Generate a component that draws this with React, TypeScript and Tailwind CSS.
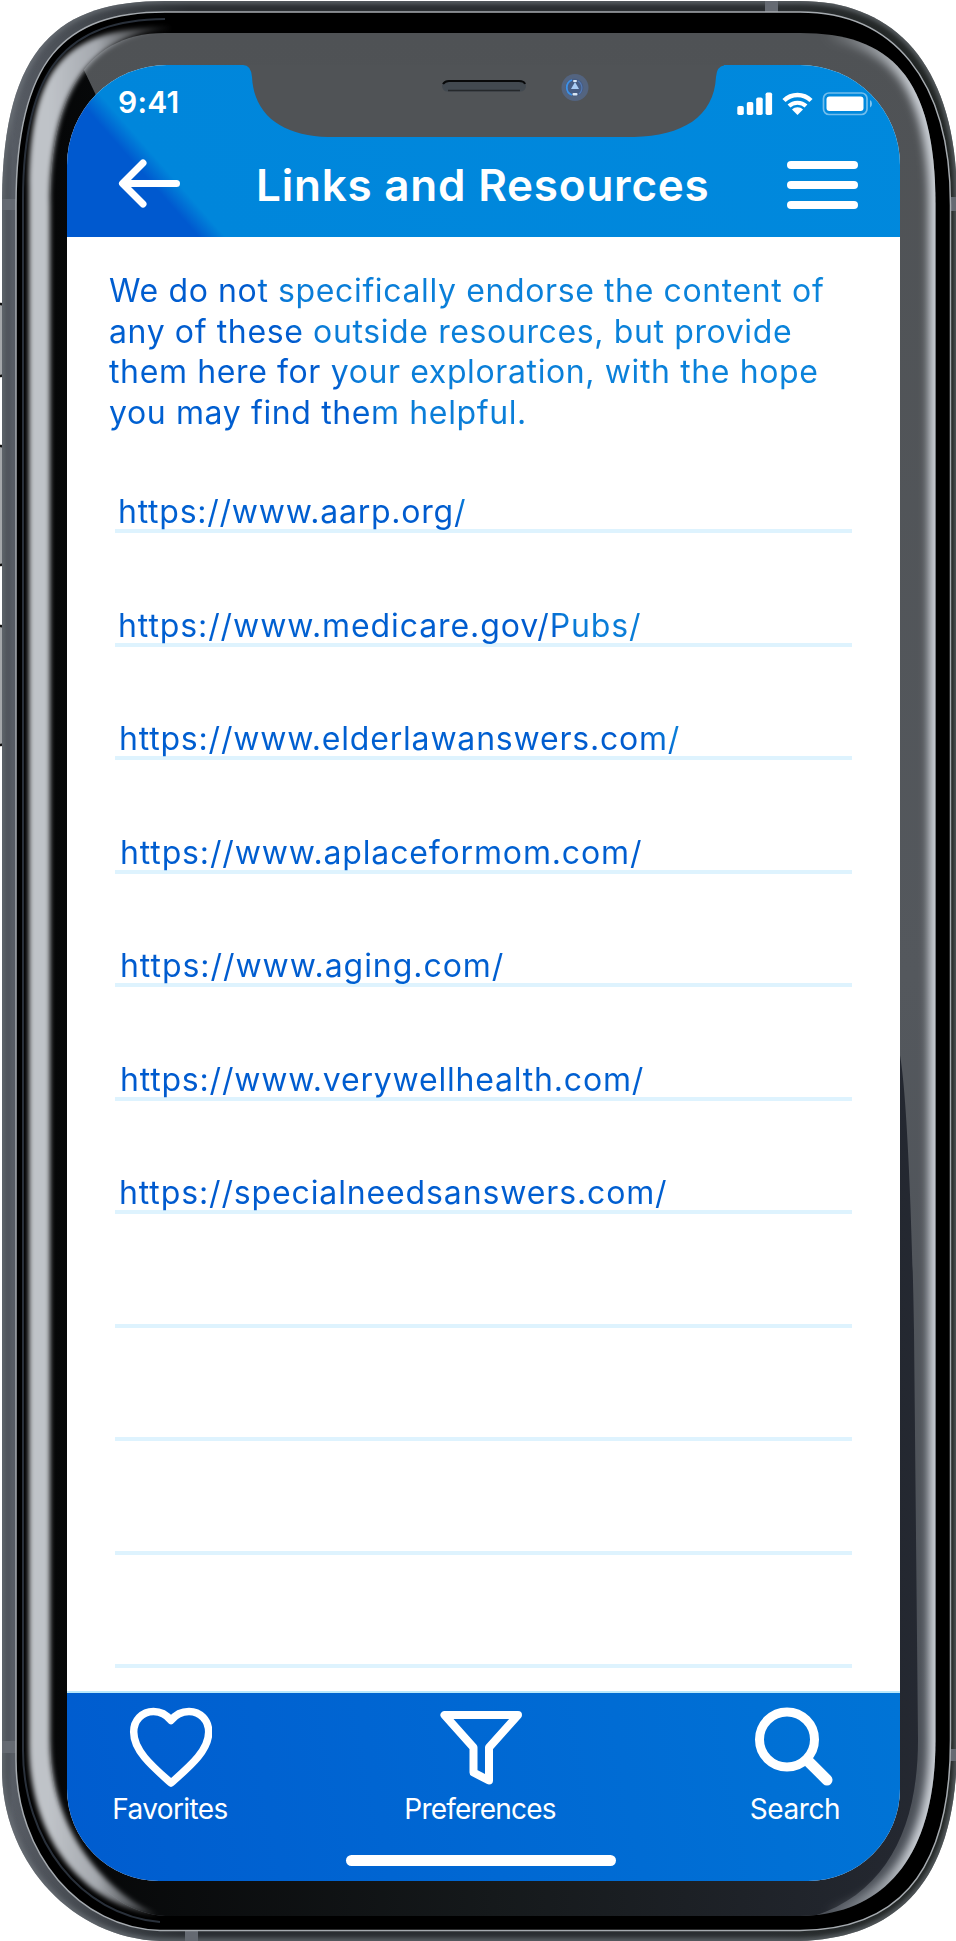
import React from "react";

const links = [
  { url: "https://www.aarp.org/", className: "pl-[3px] tracking-[0.75px]" },
  { url: "https://www.medicare.gov/Pubs/", className: "pl-[3px] tracking-[0.9px]" },
  { url: "https://www.elderlawanswers.com/", className: "pl-[4px] tracking-[0.8px]" },
  { url: "https://www.aplaceformom.com/", className: "pl-[5px] tracking-[0.85px]" },
  { url: "https://www.aging.com/", className: "pl-[5px] tracking-[0.95px]" },
  { url: "https://www.verywellhealth.com/", className: "pl-[5px] tracking-[0.8px]" },
  { url: "https://specialneedsanswers.com/", className: "pl-[4px] tracking-[0.87px]" },
  { url: "", className: "" },
  { url: "", className: "" },
  { url: "", className: "" },
  { url: "", className: "" },
];

const intro = [
  "We do not specifically endorse the content of",
  "any of these outside resources, but provide",
  "them here for your exploration, with the hope",
  "you may find them helpful.",
];

const OUTER =
  "M165 1H800C895 1 957 65 957 200V1745C957 1890 890 1938 800 1941H160C70 1938 2 1860 2 1770V200C3 45 60 1 165 1Z";
const RIM =
  "M165 12H800C892 12 950.500 78 950.500 205V1740C950.500 1882 890 1930 800 1930.500H160C80 1928 16 1855 16 1760V205C16 60 64 12 165 12Z";
const PANEL =
  "M165 33H800C890 33 935.500 76 935.500 205V1740C935.500 1862 880 1915 800 1916H165C95 1912 50 1830 50 1740V205C50 105 80 33 165 33Z";

function PhoneBody() {
  return (
    <svg className="absolute inset-0" width="956" height="1941" viewBox="0 0 956 1941" fill="none" aria-hidden="true">
      <defs>
        <linearGradient id="metal" x1="0" x2="956" y1="0" y2="0" gradientUnits="userSpaceOnUse">
          <stop offset="0" stopColor="#40454b" />
          <stop offset="0.013" stopColor="#575c64" />
          <stop offset="0.2" stopColor="#2a2e32" />
          <stop offset="0.8" stopColor="#2a2e31" />
          <stop offset="1" stopColor="#202422" />
        </linearGradient>
        <linearGradient id="panel" x1="0" x2="0" y1="33" y2="1916" gradientUnits="userSpaceOnUse">
          <stop offset="0" stopColor="#4f5255" />
          <stop offset="0.5" stopColor="#54585d" />
          <stop offset="1" stopColor="#4a4f57" />
        </linearGradient>
        <linearGradient id="base" x1="50" x2="935" y1="0" y2="0" gradientUnits="userSpaceOnUse">
          <stop offset="0" stopColor="#050607" />
          <stop offset="0.5" stopColor="#15191b" />
          <stop offset="1" stopColor="#252932" />
        </linearGradient>
        <linearGradient id="leftShine" x1="50" x2="168" y1="0" y2="0" gradientUnits="userSpaceOnUse">
          <stop offset="0" stopColor="#bfc3c8" />
          <stop offset="0.4" stopColor="#a4a8ae" />
          <stop offset="1" stopColor="#8f9398" stopOpacity="0.1" />
        </linearGradient>
        <linearGradient id="rightShine" x1="825" x2="915" y1="0" y2="0" gradientUnits="userSpaceOnUse">
          <stop offset="0" stopColor="#c3c9cf" stopOpacity="0" />
          <stop offset="1" stopColor="#c9ced4" />
        </linearGradient>
        <clipPath id="panelClip"><path d={PANEL} /></clipPath>
        <clipPath id="outerClip"><path d={OUTER} /></clipPath>
        <filter id="soft2" x="-20%" y="-5%" width="140%" height="110%"><feGaussianBlur stdDeviation="2.6" /></filter>
        <filter id="soft4" x="-20%" y="-5%" width="140%" height="110%"><feGaussianBlur stdDeviation="4.5" /></filter>
      </defs>
      {[[304, 72], [446, 119], [626, 119]].map(([y, h]) => (
        <rect key={y} x="-4" y={y} width="8" height={h} rx="3" fill="#a4a7aa" stroke="#111" strokeWidth="2.500" />
      ))}
      <path d={OUTER} fill="url(#metal)" />
      <g clipPath="url(#outerClip)">
        <path d={OUTER} stroke="#70767c" strokeWidth="4" filter="url(#soft2)" />
        <path d="M2 199H16V210H2ZM765 1H778V13H765ZM185 1930H198V1941H185ZM2 1741H16V1753H2ZM949 197H957V211H949ZM949 1749H957V1761H949Z" fill="#656a72" />
      </g>
      <path d={RIM} fill="#000" stroke="#a6abb0" strokeWidth="1.500" />
      <path d={PANEL} fill="url(#panel)" />
      <g clipPath="url(#panelClip)">
        <path d="M40 130L83 68L104 112V1500H899V1050C908 1090 913 1260 914 1330L918 1740C918 1830 885 1900 800 1920H40Z" fill="url(#base)" />
        <path d="M800 30C892 30 938 76 938 205V1740C938 1864 880 1918 800 1920" stroke="url(#rightShine)" strokeWidth="19" filter="url(#soft4)" />
      </g>
      <path d="M170 27C70 28 29 60 29 190V1745C29 1835 80 1905 158 1915C105 1892 50 1830 50 1740V205C50 105 80 36 170 29Z" fill="url(#leftShine)" filter="url(#soft2)" />
      <path d="M165 19C68 20 23 66 23 200V1750C23 1840 80 1915 160 1922" stroke="#29303a" strokeWidth="2" />
    </svg>
  );
}

function Notch() {
  return (
    <svg className="absolute left-[171px] top-0" width="488" height="73" viewBox="238 65 488 73" fill="none" aria-hidden="true">
      <path d="M238 64V65H243Q251 65 252 77C254 117 285 136 328 137H634C682 136 714 117 716 77Q717 66 724 65.500V64Z" fill="#505356" />
      <rect x="442" y="80.500" width="84" height="11" rx="5.500" fill="#424950" />
      <path d="M443 84Q445 81 449 81H519Q524 81 525 84" stroke="#08090a" strokeWidth="2" />
      <path d="M448 90.500H520" stroke="#25282b" strokeWidth="1.500" />
      <circle cx="575" cy="87.500" r="13.500" fill="#536480" />
      <circle cx="574.500" cy="87.500" r="9" fill="#465c83" />
      <path d="M572 80A8 8 0 0 0 572 95" stroke="#3c91e8" strokeWidth="1.800" />
      <path d="M578 81A8 8 0 0 1 579 94" stroke="#5279b5" strokeWidth="1.200" />
      <path d="M575 82L579 89H571Z" fill="#a9ccf5" />
      <rect x="572.500" y="93" width="5" height="2.500" rx="1" fill="#d8e5f4" />
      <rect x="573" y="80" width="4" height="2" rx="1" fill="#d8e5f4" />
    </svg>
  );
}

function StatusIcons() {
  return (
    <svg width="136" height="25" viewBox="736 91 136 25" fill="none" aria-hidden="true">
      <g fill="#fff">
        <rect x="737.300" y="106" width="6.500" height="9" rx="1.800" />
        <rect x="746.800" y="102" width="6.500" height="13" rx="1.800" />
        <rect x="756.200" y="97.500" width="6.500" height="17.500" rx="1.800" />
        <rect x="765.600" y="92.500" width="6.500" height="22.500" rx="1.800" />
        <rect x="826.500" y="96.500" width="37" height="14.500" rx="3" />
        <path d="M797.500 115L792 109.500C795 106.500 800 106.500 803 109.500Z" />
        <path d="M870 100Q872 101 872 103.700Q872 106.500 870 107.500Z" opacity="0.5" />
      </g>
      <path d="M784 100.500C791.500 93 803.500 93 811 100.500" stroke="#fff" strokeWidth="4.500" />
      <path d="M789 106C793.500 101.500 801.500 101.500 806 106" stroke="#fff" strokeWidth="4" />
      <rect x="823.500" y="93" width="43.500" height="21.500" rx="5.500" stroke="#fff" strokeOpacity="0.45" strokeWidth="1.700" />
    </svg>
  );
}

function Header() {
  return (
    <header className="relative h-[172px] shrink-0 bg-[linear-gradient(48.7deg,#0059cf_0px,#0059cf_99px,#0086db_119px,#0089dd_100%)] text-white">
      <Notch />
      <div className="flex h-[66px] items-start justify-between pt-[19px] pr-[28px] pl-[51px]">
        <span className="text-[30px] leading-[36px] font-semibold tracking-[0.2px] whitespace-nowrap">9:41</span>
        <div className="pt-[7px]"><StatusIcons /></div>
      </div>
      <div className="flex h-[105px] items-start pt-[26px] pl-[51px]">
        <svg className="mt-[2px] shrink-0" width="63" height="50" viewBox="118 159 63 50" fill="none" aria-hidden="true">
          <path d="M176.500 183.500H123M143 163L122.500 183.500L143 204" stroke="#fff" strokeWidth="7" strokeLinecap="round" strokeLinejoin="round" />
        </svg>
        <h1 className="ml-[75px] w-[460px] shrink-0 text-[44px] leading-[56px] font-semibold tracking-[0.78px] whitespace-nowrap">Links and Resources</h1>
        <div className="ml-[71px] flex w-[71px] shrink-0 flex-col gap-[12px] pt-[4px]">
          <span className="h-[8px] rounded-full bg-white" />
          <span className="h-[8px] rounded-full bg-white" />
          <span className="h-[8px] rounded-full bg-white" />
        </div>
      </div>
    </header>
  );
}

function Heart() {
  return (
    <svg width="84" height="82" viewBox="128 1707 84 82" fill="none" aria-hidden="true">
      <path d="M171 1720.500C166 1714 160 1711.500 153.500 1711.500C142 1711.500 133.700 1720.500 133.700 1732C133.700 1751 153 1767 171 1783C189 1767 208.700 1751 208.700 1732C208.700 1720.500 200.500 1711.500 189 1711.500C182 1711.500 176 1714 171 1720.500Z" stroke="#fff" strokeWidth="7.500" strokeLinejoin="round" />
    </svg>
  );
}

function Funnel() {
  return (
    <svg width="84" height="82" viewBox="438 1707 84 82" fill="none" aria-hidden="true">
      <path d="M444.500 1715H518L489 1747.500V1780.500L473.500 1772.500V1747.500Z" stroke="#fff" strokeWidth="8" strokeLinejoin="round" />
    </svg>
  );
}

function Magnifier() {
  return (
    <svg width="84" height="82" viewBox="752 1707 84 82" fill="none" aria-hidden="true">
      <circle cx="786" cy="1739.500" r="27.500" stroke="#fff" strokeWidth="9" />
      <path d="M807 1761L826 1780" stroke="#fff" strokeWidth="11" strokeLinecap="round" />
    </svg>
  );
}

function Tab({ label, className, children }: { label: string; className: string; children: React.ReactNode }) {
  return (
    <button className={"flex flex-col items-center text-[28px] leading-[34px] font-normal whitespace-nowrap " + className}>
      {children}
      <span className="mt-[3px]">{label}</span>
    </button>
  );
}

export default function App() {
  return (
    <div className="relative flex h-[1941px] w-[956px] overflow-hidden bg-white px-[67px] pt-[65px] font-['Inter',sans-serif]">
      <PhoneBody />
      <div className="relative flex h-[1816px] w-[833px] shrink-0 flex-col overflow-hidden rounded-[100px_100px_92px_92px] bg-white">
        <Header />
        <main className="h-[1454px] shrink-0 bg-[linear-gradient(48.7deg,#0055cc_0px,#0060d1_900px,#005ace_1062px,#0a7dd8_1085px,#0a86dc_100%)] bg-clip-text pt-[34px] text-[32px] font-normal text-transparent">
          <div className="pl-[42px] leading-[40.7px] tracking-[0.62px] whitespace-nowrap">
            {intro.map((t) => (
              <p key={t}>{t}</p>
            ))}
          </div>
          {/* Translucent rules let the descenders of the gradient text show through. */}
          <ul className="mt-[-14px] ml-[48px] w-[737px]">
            {links.map(({ url, className }, i) => (
              <li key={i} className={"flex h-[113.5px] items-end border-b-[4px] border-[rgba(0,163,247,0.13)] leading-[40px] whitespace-nowrap " + className}>
                <span className="-mb-[3px]">{url}</span>
              </li>
            ))}
          </ul>
        </main>
        <footer className="flex flex-1 flex-col items-center border-t-2 border-[#b9e8fb] bg-[linear-gradient(80deg,#005ccf,#0068d3_50%,#0074d6)] pr-[5px] text-white">
          <div className="flex h-[134px] w-full items-start pt-[14px] pr-[54px] pl-[44px]">
            <Tab label="Favorites" className="w-[118px] tracking-[-0.6px]"><Heart /></Tab>
            <Tab label="Preferences" className="ml-[173px] w-[156px] tracking-[-0.8px]"><Funnel /></Tab>
            <Tab label="Search" className="ml-auto w-[92px] tracking-[-0.4px]"><Magnifier /></Tab>
          </div>
          <div className="mt-[28px] h-[11px] w-[270px] rounded-full bg-white" />
        </footer>
      </div>
    </div>
  );
}
